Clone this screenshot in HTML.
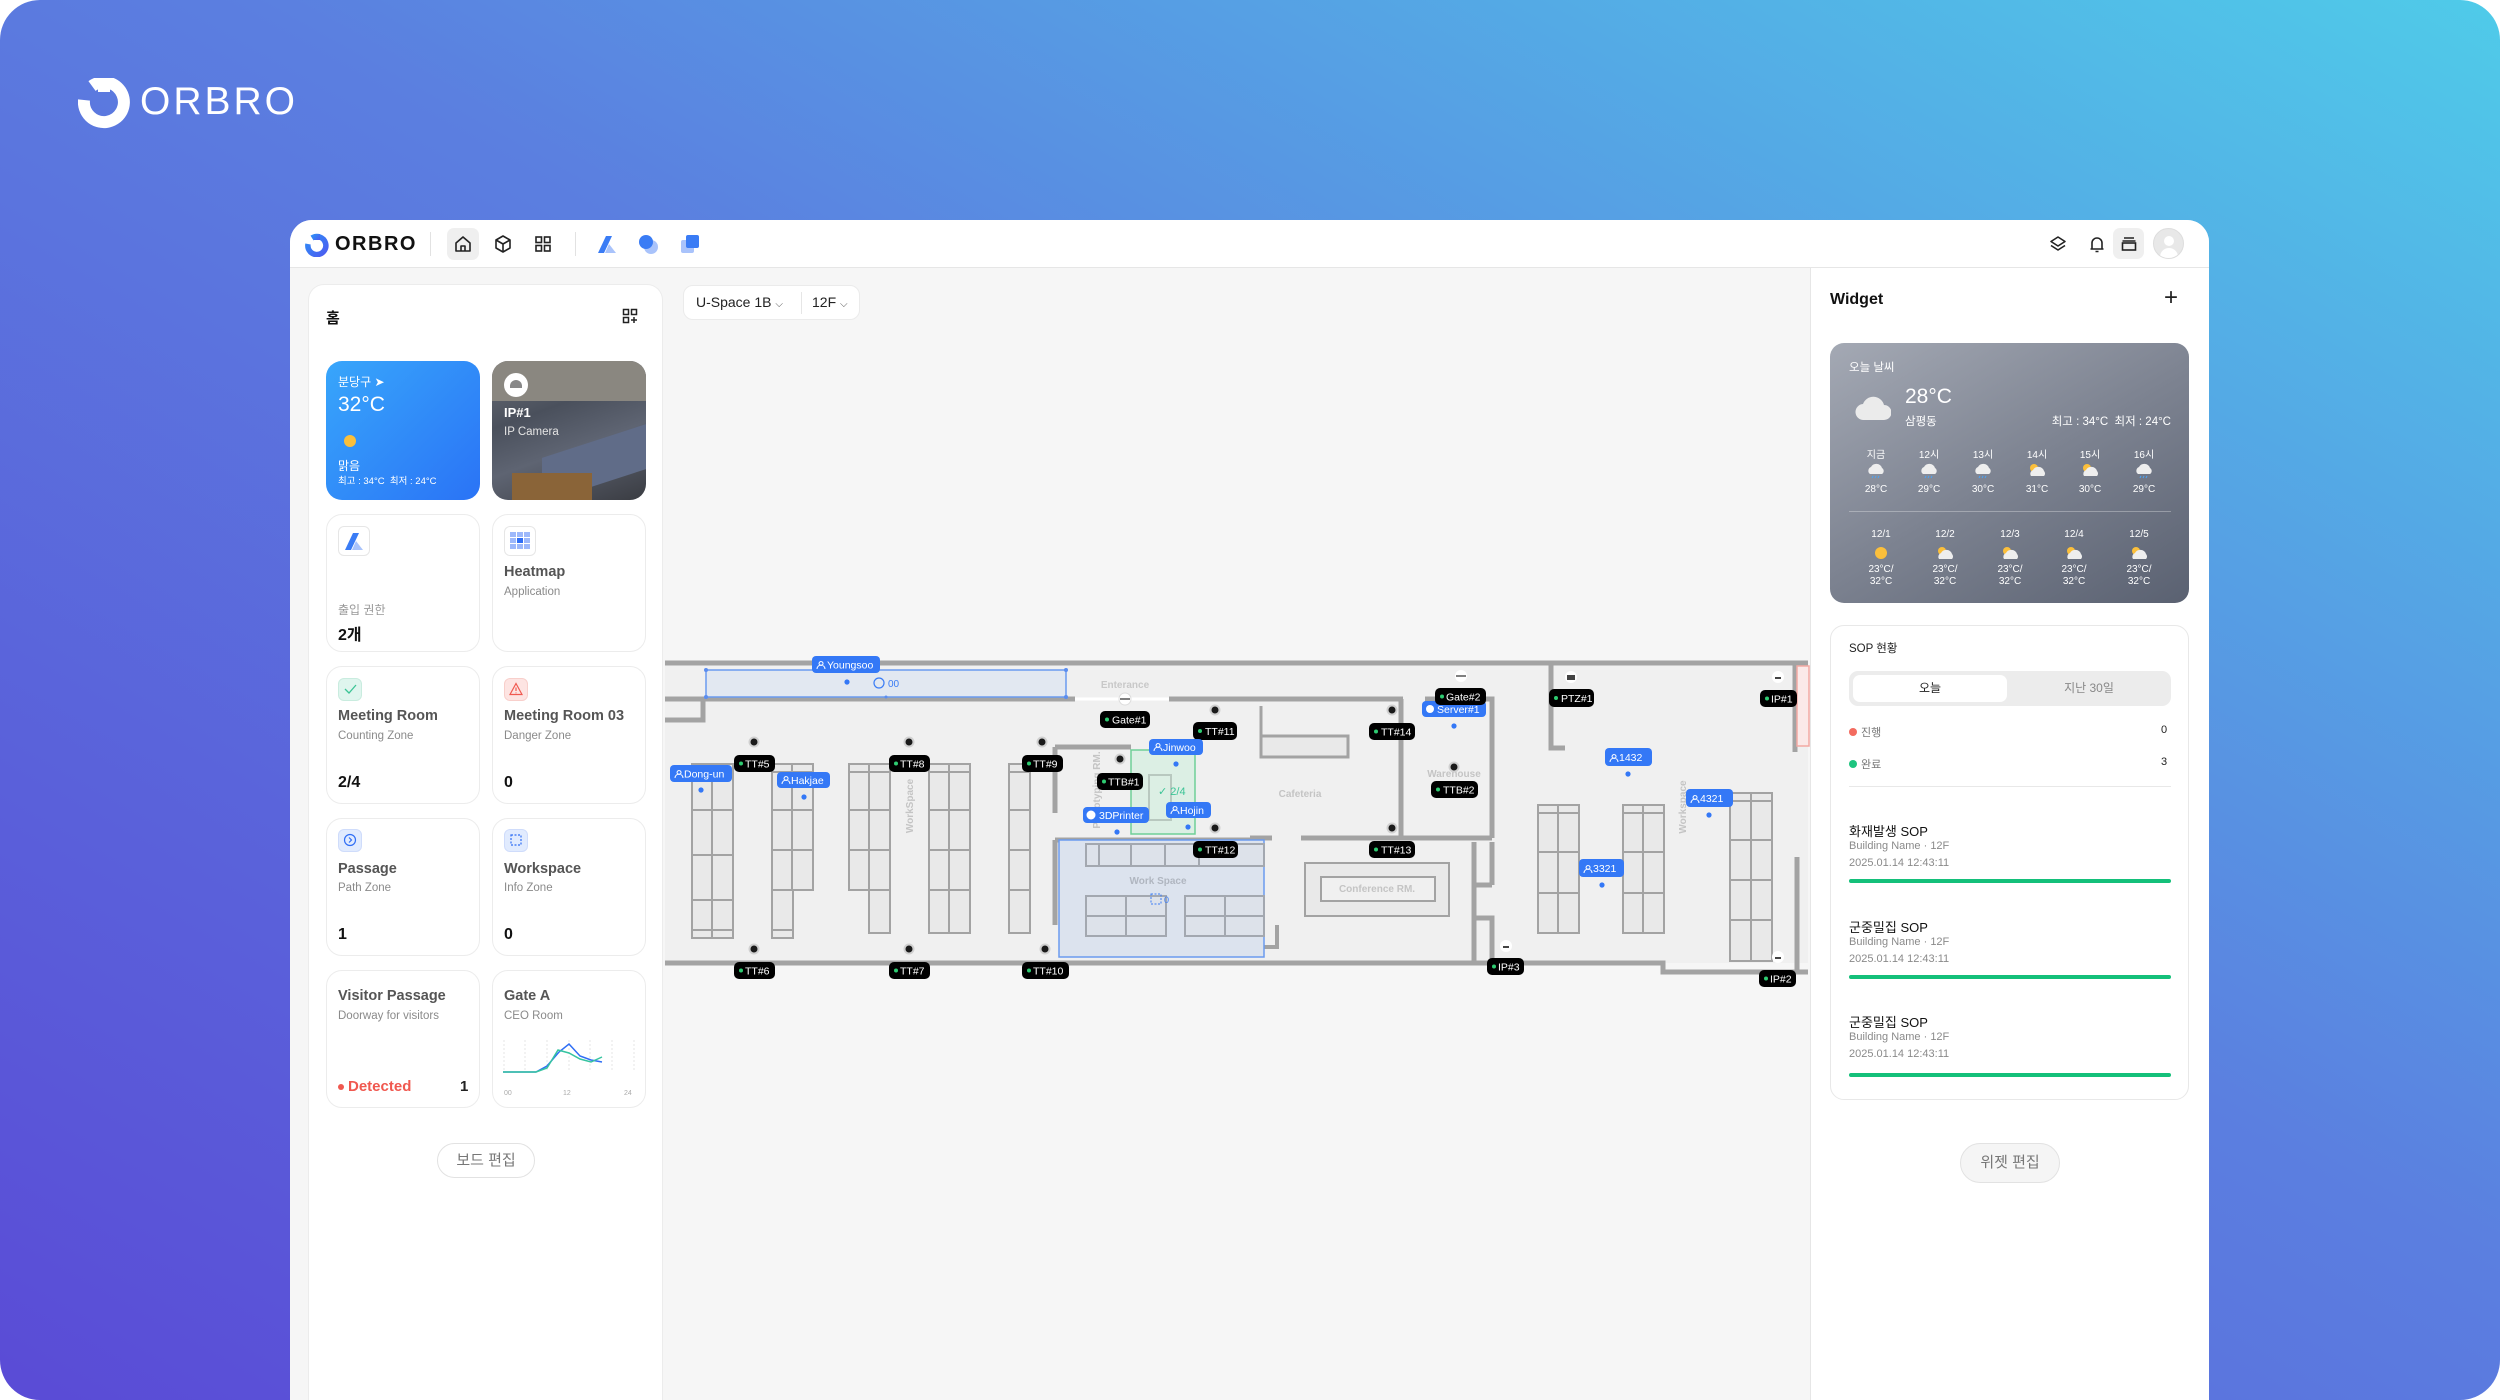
<!DOCTYPE html>
<html style="width:2500px;height:1400px;overflow:hidden"><head><meta charset="utf-8">
<style>
*{margin:0;padding:0;box-sizing:border-box}
body{width:2500px;height:1400px;overflow:hidden;background:#fff;font-family:"Liberation Sans","Noto Sans CJK KR",sans-serif;position:relative}
.bg{position:absolute;left:0;top:0;width:2500px;height:1400px;border-radius:40px;background:linear-gradient(to top right,#5a4bd6 0%,#5b7fe0 55%,#4fcbe9 100%);overflow:hidden}
.a{position:absolute}
.win{position:absolute;left:290px;top:220px;width:1919px;height:1180px;background:#f6f6f6;border-radius:22px 22px 0 0;overflow:hidden}
.top{position:absolute;left:290px;top:220px;width:1919px;height:48px;background:#fff;border-bottom:1px solid #e6e6e6;border-radius:22px 22px 0 0}
.panel{position:absolute;left:308px;top:284px;width:355px;height:1116px;background:#fff;border:1px solid #ececec;border-bottom:none;border-radius:16px 16px 0 0}
.card{position:absolute;width:154px;height:138px;background:#fff;border:1px solid #ececec;border-radius:16px}
.t{position:absolute;white-space:nowrap}
.ttl{font-size:14.5px;font-weight:bold;color:#555}
.sub{font-size:11.5px;color:#8a8a8a}
.val{font-size:16px;font-weight:bold;color:#111}
.ib{position:absolute;width:24px;height:23px;border-radius:6px}
.rp{position:absolute;left:1810px;top:268px;width:399px;height:1132px;background:#fff;border-left:1px solid #e6e6e6}
.w{color:#fff;position:absolute;white-space:nowrap;text-align:center}
.btn{position:absolute;background:#f5f5f5;border:1px solid #e2e2e2;border-radius:20px;color:#777;font-size:15px;text-align:center}
</style></head><body>
<div class="bg">
 <svg class="a" style="left:78px;top:78px" width="52" height="52" viewBox="0 0 52 52">
  <path d="M14 8 A20 20 0 1 1 6 22" fill="none" stroke="#fff" stroke-width="12"/>
  <rect x="20" y="2" width="12" height="12" fill="#fff"/>
 </svg>
 <div class="t" style="left:140px;top:80px;font-size:39px;color:#fff;letter-spacing:3px">ORBRO</div>
</div>

<div class="win"></div>
<div class="top">
 <svg class="a" style="left:15px;top:13px" width="24" height="24" viewBox="0 0 24 24"><defs><linearGradient id="lg" x1="0" y1="0" x2="1" y2="1"><stop offset="0" stop-color="#2f8df7"/><stop offset="1" stop-color="#4b5cf0"/></linearGradient></defs><path d="M7 5 A9 9 0 1 1 3 11" fill="none" stroke="url(#lg)" stroke-width="5.5"/><rect x="9" y="1" width="6" height="6" fill="url(#lg)"/></svg>
 <div class="t" style="left:45px;top:13px;font-size:20px;font-weight:bold;color:#111;letter-spacing:1.5px">ORBRO</div>
 <div class="a" style="left:140px;top:12px;width:1px;height:24px;background:#e2e2e2"></div>
 <div class="a" style="left:157px;top:8px;width:32px;height:32px;background:#efefef;border-radius:7px"></div>
 <svg class="a" style="left:163px;top:14px" width="20" height="20" viewBox="0 0 20 20" fill="none" stroke="#222" stroke-width="1.6" stroke-linejoin="round"><path d="M3 9 L10 3 L17 9 V17 H3 Z"/><path d="M8 17 V12 H12 V17"/></svg>
 <svg class="a" style="left:203px;top:14px" width="20" height="20" viewBox="0 0 20 20" fill="none" stroke="#222" stroke-width="1.6" stroke-linejoin="round"><path d="M10 2 L17 6 V14 L10 18 L3 14 V6 Z"/><path d="M3 6 L10 10 L17 6 M10 10 V18"/></svg>
 <svg class="a" style="left:243px;top:14px" width="20" height="20" viewBox="0 0 20 20" fill="none" stroke="#222" stroke-width="1.6"><rect x="3" y="3" width="5.5" height="5.5"/><rect x="11.5" y="3" width="5.5" height="5.5"/><rect x="3" y="11.5" width="5.5" height="5.5"/><rect x="11.5" y="11.5" width="5.5" height="5.5"/></svg>
 <div class="a" style="left:285px;top:12px;width:1px;height:24px;background:#e2e2e2"></div>
 <svg class="a" style="left:306px;top:13px" width="22" height="22" viewBox="0 0 22 22"><path d="M2 20 L10 3 H16 L8 20 Z" fill="#3a7cf5"/><path d="M13 11 L20 20 H9 Z" fill="#a9c3fb"/></svg>
 <svg class="a" style="left:347px;top:13px" width="22" height="22" viewBox="0 0 22 22"><circle cx="14" cy="14" r="7" fill="#a9c3fb"/><circle cx="9" cy="9" r="7" fill="#3a7cf5"/></svg>
 <svg class="a" style="left:389px;top:13px" width="22" height="22" viewBox="0 0 22 22"><rect x="2" y="7" width="13" height="13" rx="2" fill="#a9c3fb"/><rect x="7" y="2" width="13" height="13" rx="2" fill="#3a7cf5"/></svg>
 <svg class="a" style="left:1758px;top:14px" width="20" height="20" viewBox="0 0 20 20" fill="none" stroke="#222" stroke-width="1.6" stroke-linejoin="round"><path d="M10 3 L17 7.5 L10 12 L3 7.5 Z"/><path d="M3 11.5 L10 16 L17 11.5"/></svg>
 <svg class="a" style="left:1797px;top:14px" width="20" height="20" viewBox="0 0 20 20" fill="none" stroke="#222" stroke-width="1.6"><path d="M5 15 V9 A5 5 0 0 1 15 9 V15 M3.5 15 H16.5 M8.5 17.5 H11.5"/></svg>
 <div class="a" style="left:1823px;top:8px;width:31px;height:31px;background:#efefef;border-radius:7px"></div>
 <svg class="a" style="left:1829px;top:14px" width="20" height="20" viewBox="0 0 20 20" fill="none" stroke="#222" stroke-width="1.6"><path d="M5 4 H15 M3.5 7 H16.5"/><rect x="3.5" y="9" width="13" height="7"/></svg>
 <div class="a" style="left:1863px;top:8px;width:31px;height:31px;background:#e8e8e8;border-radius:50%;border:1px solid #ddd;overflow:hidden"><div class="a" style="left:10px;top:7px;width:10px;height:10px;border-radius:50%;background:#fff"></div><div class="a" style="left:6px;top:19px;width:18px;height:12px;border-radius:9px 9px 0 0;background:#fff"></div></div>
</div>

<div class="panel"></div>
<div class="t" style="left:326px;top:307px;font-size:15px;font-weight:bold;color:#111">홈</div>
<svg class="a" style="left:622px;top:308px" width="16" height="16" viewBox="0 0 16 16" fill="none" stroke="#222" stroke-width="1.5"><rect x="1.5" y="1.5" width="5" height="5"/><rect x="9.5" y="1.5" width="5" height="5"/><rect x="1.5" y="9.5" width="5" height="5"/><path d="M12 9 V15 M9 12 H15"/></svg>

<div class="card" style="left:326px;top:361px;height:139px;border:none;background:linear-gradient(135deg,#38a6fb,#2a73f6)"></div>
<div class="w" style="left:338px;top:373px;font-size:12px">분당구 ➤</div>
<div class="w" style="left:338px;top:393px;font-size:21px">32°C</div>
<div class="a" style="left:344px;top:435px;width:12px;height:12px;border-radius:50%;background:#fbbf3b"></div>
<div class="w" style="left:338px;top:457px;font-size:12px">맑음</div>
<div class="w" style="left:338px;top:473px;font-size:9.5px">최고 : 34°C &nbsp;최저 : 24°C</div>

<div class="card" style="left:492px;top:361px;height:139px;border:none;overflow:hidden;background:linear-gradient(160deg,#6c7078 0%,#4a505c 35%,#5e6472 60%,#3a3c42 100%)">
 <div class="a" style="left:0;top:0;width:154px;height:40px;background:#8a8780"></div>
 <div class="a" style="left:50px;top:80px;width:104px;height:45px;background:#606c88;transform:skewY(-18deg)"></div>
 <div class="a" style="left:20px;top:112px;width:80px;height:30px;background:#8a6438"></div>
</div>
<div class="a" style="left:504px;top:373px;width:24px;height:24px;border-radius:50%;background:#fff"><div class="a" style="left:6px;top:7px;width:12px;height:8px;border-radius:6px 6px 0 0;background:#888"></div></div>
<div class="w" style="left:504px;top:405px;font-size:13px;font-weight:bold">IP#1</div>
<div class="w" style="left:504px;top:426px;font-size:11.5px;color:#e4e4e4">IP Camera</div>

<div class="card" style="left:326px;top:514px"></div>
<div class="ib" style="left:338px;top:526px;width:32px;height:30px;border:1px solid #e6e6e6;background:#fff"></div>
<svg class="a" style="left:342px;top:530px" width="24" height="22" viewBox="0 0 22 22"><path d="M2 20 L10 3 H16 L8 20 Z" fill="#3a7cf5"/><path d="M13 11 L20 20 H9 Z" fill="#a9c3fb"/></svg>
<div class="t" style="left:338px;top:601px;font-size:12px;color:#999">출입 권한</div>
<div class="t val" style="left:338px;top:621px">2개</div>
<div class="card" style="left:492px;top:514px"></div>
<div class="ib" style="left:504px;top:526px;width:32px;height:30px;border:1px solid #e6e6e6;background:#fff"></div>
<svg class="a" style="left:510px;top:532px" width="20" height="18" viewBox="0 0 20 18"><g fill="#9db8fb"><rect x="0" y="0" width="6" height="5"/><rect x="7" y="0" width="6" height="5"/><rect x="14" y="0" width="6" height="5"/><rect x="0" y="6" width="6" height="5"/><rect x="14" y="6" width="6" height="5"/><rect x="0" y="12" width="6" height="5"/><rect x="7" y="12" width="6" height="5"/><rect x="14" y="12" width="6" height="5"/></g><rect x="7" y="6" width="6" height="5" fill="#2f6ef5"/></svg>
<div class="t ttl" style="left:504px;top:564px">Heatmap</div>
<div class="t sub" style="left:504px;top:586px">Application</div>

<div class="card" style="left:326px;top:666px"></div>
<div class="ib" style="left:338px;top:678px;background:#dff5ee;border:1px solid #c9ecdf"></div>
<svg class="a" style="left:343px;top:682px" width="14" height="14" viewBox="0 0 14 14"><path d="M2 7 L6 11 L13 3" fill="none" stroke="#3cc496" stroke-width="1.3"/></svg>
<div class="t ttl" style="left:338px;top:708px">Meeting Room</div>
<div class="t sub" style="left:338px;top:730px">Counting Zone</div>
<div class="t val" style="left:338px;top:774px">2/4</div>
<div class="card" style="left:492px;top:666px"></div>
<div class="ib" style="left:504px;top:678px;background:#fde4e2;border:1px solid #f8cfcb"></div>
<svg class="a" style="left:509px;top:682px" width="14" height="14" viewBox="0 0 14 14" fill="none" stroke="#f0584f" stroke-width="1.2"><path d="M7 1.5 L13 12.5 H1 Z"/><path d="M7 5.5 V9 M7 10.5 V11.3"/></svg>
<div class="t ttl" style="left:504px;top:708px">Meeting Room 03</div>
<div class="t sub" style="left:504px;top:730px">Danger Zone</div>
<div class="t val" style="left:504px;top:774px">0</div>

<div class="card" style="left:326px;top:818px"></div>
<div class="ib" style="left:338px;top:829px;background:#e1ebfe;border:1px solid #cfdcfb"></div>
<svg class="a" style="left:343px;top:833px" width="14" height="14" viewBox="0 0 14 14" fill="none" stroke="#2f6ef5" stroke-width="1.2"><circle cx="7" cy="7" r="5.5"/><path d="M6 4.5 L8.5 7 L6 9.5"/></svg>
<div class="t ttl" style="left:338px;top:861px">Passage</div>
<div class="t sub" style="left:338px;top:882px">Path Zone</div>
<div class="t val" style="left:338px;top:926px">1</div>
<div class="card" style="left:492px;top:818px"></div>
<div class="ib" style="left:504px;top:829px;background:#e1ebfe;border:1px solid #cfdcfb"></div>
<svg class="a" style="left:509px;top:833px" width="14" height="14" viewBox="0 0 14 14" fill="none" stroke="#2f6ef5" stroke-width="1.2" stroke-dasharray="2 1.5"><rect x="2" y="2" width="10" height="10"/></svg>
<div class="t ttl" style="left:504px;top:861px">Workspace</div>
<div class="t sub" style="left:504px;top:882px">Info Zone</div>
<div class="t val" style="left:504px;top:926px">0</div>

<div class="card" style="left:326px;top:970px"></div>
<div class="t ttl" style="left:338px;top:988px">Visitor Passage</div>
<div class="t sub" style="left:338px;top:1010px">Doorway for visitors</div>
<div class="a" style="left:338px;top:1084px;width:6px;height:6px;border-radius:50%;background:#f0584f"></div>
<div class="t" style="left:348px;top:1078px;font-size:15px;font-weight:bold;color:#f0584f">Detected</div>
<div class="t" style="left:460px;top:1078px;font-size:15px;font-weight:bold;color:#222">1</div>
<div class="card" style="left:492px;top:970px"></div>
<div class="t ttl" style="left:504px;top:988px">Gate A</div>
<div class="t sub" style="left:504px;top:1010px">CEO Room</div>
<svg class="a" style="left:503px;top:1040px" width="132" height="60" viewBox="0 0 132 60">
 <g stroke="#e4e4e4" stroke-dasharray="2 2" stroke-width="1"><path d="M1 0 V32 M22 0 V32 M44 0 V32 M66 0 V32 M87 0 V32 M109 0 V32 M131 0 V32"/></g>
 <path d="M0 32 H33 L44 26 L56 12 L66 4 L77 16 L88 20 L99 22" fill="none" stroke="#2f6ef5" stroke-width="1.5"/>
 <path d="M0 32 H33 L44 28 L55 10 L66 13 L77 19 L88 22 L99 17" fill="none" stroke="#36c4a0" stroke-width="1.5"/>
 <text x="1" y="55" font-size="7" fill="#aaa" font-family="Liberation Sans">00</text>
 <text x="60" y="55" font-size="7" fill="#aaa" font-family="Liberation Sans">12</text>
 <text x="121" y="55" font-size="7" fill="#aaa" font-family="Liberation Sans">24</text>
</svg>
<div class="btn" style="left:437px;top:1143px;width:98px;height:35px;line-height:33px;background:#fff">보드 편집</div>

<div class="a" style="left:683px;top:285px;width:177px;height:35px;background:#fff;border:1px solid #ebebeb;border-radius:10px"></div>
<div class="t" style="left:696px;top:294px;font-size:14px;color:#222">U-Space 1B <span style="font-size:10px;color:#555">⌵</span></div>
<div class="a" style="left:801px;top:292px;width:1px;height:22px;background:#e6e6e6"></div>
<div class="t" style="left:812px;top:294px;font-size:14px;color:#222">12F <span style="font-size:10px;color:#555">⌵</span></div>

<svg class="a" style="left:0;top:0" width="2500" height="1400" viewBox="0 0 2500 1400" font-family="Liberation Sans">
 <rect x="665" y="663" width="1143" height="300" fill="#f0f0f0"/>
 <g fill="none" stroke="#a3a3a3" stroke-width="5">
  <path d="M665 663 H1808"/>
  <path d="M665 699 H1075 M1169 699 H1250"/>
  <path d="M665 720 H703 V699"/>
  <path d="M665 963 H1663 V972 H1808"/>
  <path d="M1055 747 V813 M1055 747 H1131 M1055 925 V840 M1055 840 H1264"/>
  <path d="M1250 699 H1403 M1425 699 H1492 V838 M1401 699 V837 M1272 838 H1250 M1301 838 H1492"/>
  <path d="M1474 842 V963 M1492 842 V885 M1474 885 H1492 M1474 918 H1492 V963"/>
  <path d="M1551 663 V748 H1565"/>
  <path d="M1795 663 V752 M1797 857 V970"/>
  <path d="M1261 706 V736 H1348 V757 H1261 Z" stroke-width="3" fill="#e9e9e9"/>
  <path d="M1277 925 V947 H1262" stroke-width="4"/>
 </g>
 <rect x="1797" y="666" width="12" height="80" fill="#fbe9e8" stroke="#f3a9a3" stroke-width="1.5"/>
 <path d="M1075 699 H1169" stroke="#fff" stroke-width="3"/>
 <circle cx="1125" cy="699" r="6" fill="#fff" stroke="#ddd"/><path d="M1120 699 H1130" stroke="#555" stroke-width="1.5"/>
 <text x="1125" y="688" font-size="10" fill="#c8c8c8" text-anchor="middle" font-weight="bold">Enterance</text>
 <rect x="706" y="670" width="360" height="27" fill="#e2e8f1" stroke="#6b9bef" stroke-width="1.5"/>
 <g fill="#5b8def"><circle cx="706" cy="670" r="2"/><circle cx="1066" cy="670" r="2"/><circle cx="706" cy="697" r="2"/><circle cx="1066" cy="697" r="2"/><circle cx="886" cy="697" r="1.5"/></g>
 <circle cx="879" cy="683" r="5" fill="none" stroke="#3a7cf5" stroke-width="1.2"/><text x="888" y="687" font-size="10" fill="#3a7cf5">00</text>
 <rect x="1131" y="750" width="64" height="84" fill="#dcefe4" stroke="#6fcf97" stroke-width="1.5"/>
 <rect x="1149" y="775" width="22" height="45" fill="none" stroke="#b8c8bf" stroke-width="2"/>
 <text x="1158" y="795" font-size="11" fill="#3cc496">✓ 2/4</text>
 <rect x="1059" y="840" width="205" height="117" fill="#dce3ee" stroke="#6b9bef" stroke-width="1.5"/>
 <g fill="#dde2ea" stroke="#a3a8b0" stroke-width="2">
  <rect x="1086" y="844" width="178" height="22"/><path d="M1099 844 V866 M1131 844 V866 M1165 844 V866 M1199 844 V866" fill="none"/>
  <rect x="1086" y="896" width="80" height="40"/><path d="M1126 896 V936 M1086 916 H1166" fill="none"/>
  <rect x="1185" y="896" width="79" height="40"/><path d="M1225 896 V936 M1185 916 H1264" fill="none"/>
 </g>
 <text x="1158" y="884" font-size="10" fill="#b0b6c0" text-anchor="middle" font-weight="bold">Work Space</text>
 <rect x="1151" y="894" width="10" height="10" fill="none" stroke="#3a7cf5" stroke-dasharray="2 1.5"/><text x="1164" y="903" font-size="9" fill="#3a7cf5">0</text>
 <g fill="#e9e9e9" stroke="#a3a3a3" stroke-width="2">
  <rect x="692" y="764" width="41" height="174"/><path d="M712 764 V938 M692 772 H733 M692 810 H733 M692 855 H733 M692 900 H733 M692 930 H733" fill="none"/>
  <rect x="772" y="764" width="41" height="126"/><path d="M792 764 V890 M772 772 H813 M772 810 H813 M772 850 H813" fill="none"/>
  <rect x="772" y="890" width="21" height="48"/><path d="M772 930 H793" fill="none"/>
  <rect x="849" y="764" width="41" height="126"/><path d="M869 764 V890 M849 772 H890 M849 810 H890 M849 850 H890" fill="none"/>
  <rect x="869" y="890" width="21" height="43"/>
  <rect x="929" y="764" width="41" height="169"/><path d="M949 764 V933 M929 772 H970 M929 810 H970 M929 850 H970 M929 890 H970" fill="none"/>
  <rect x="1009" y="764" width="21" height="169"/><path d="M1009 772 H1030 M1009 810 H1030 M1009 850 H1030 M1009 890 H1030" fill="none"/>
  <rect x="1538" y="805" width="41" height="128"/><path d="M1558 805 V933 M1538 813 H1579 M1538 852 H1579 M1538 893 H1579" fill="none"/>
  <rect x="1623" y="805" width="41" height="128"/><path d="M1643 805 V933 M1623 813 H1664 M1623 852 H1664 M1623 893 H1664" fill="none"/>
  <rect x="1730" y="793" width="42" height="168"/><path d="M1751 793 V961 M1730 801 H1772 M1730 840 H1772 M1730 880 H1772 M1730 920 H1772" fill="none"/>
 </g>
 <rect x="1305" y="863" width="144" height="53" fill="#e9e9e9" stroke="#a3a3a3" stroke-width="2"/>
 <rect x="1321" y="877" width="114" height="24" fill="#f0f0f0" stroke="#a3a3a3" stroke-width="2"/>
 <g font-size="10" fill="#c4c4c4" font-weight="bold" text-anchor="middle">
  <text x="1377" y="892">Conference RM.</text>
  <text x="1300" y="797">Cafeteria</text>
  <text x="1454" y="777">Warehouse</text>
  <text transform="translate(913 806) rotate(-90)">WorkSpace</text>
  <text transform="translate(1686 807) rotate(-90)">Workspace</text>
  <text transform="translate(1100 790) rotate(-90)">Prototyping RM.</text>
 </g>
 <circle cx="1461" cy="676" r="6" fill="#fff"/><path d="M1456 676 H1466" stroke="#555" stroke-width="1.5"/>
 <g fill="#1a1a1a" stroke="#d0d0d0" stroke-width="2">
  <circle cx="754" cy="742" r="4.5"/><circle cx="909" cy="742" r="4.5"/><circle cx="1042" cy="742" r="4.5"/><circle cx="1215" cy="710" r="4.5"/><circle cx="1120" cy="759" r="4.5"/><circle cx="1215" cy="828" r="4.5"/><circle cx="754" cy="949" r="4.5"/><circle cx="909" cy="949" r="4.5"/><circle cx="1045" cy="949" r="4.5"/><circle cx="1392" cy="710" r="4.5"/><circle cx="1454" cy="767" r="4.5"/><circle cx="1392" cy="828" r="4.5"/>
 </g>
 <g fill="#fff"><circle cx="1571" cy="677" r="6"/><circle cx="1778" cy="677" r="6"/><circle cx="1506" cy="946" r="6"/><circle cx="1778" cy="957" r="6"/></g>
 <g fill="#444"><path d="M1567 675 h8 v5 h-8z"/><path d="M1775 677 h6 v2 h-6z"/><path d="M1503 946 h6 v2 h-6z"/><path d="M1775 957 h6 v2 h-6z"/></g>
 <g font-size="10.5" fill="#fff">
  <rect x="1100" y="711" width="50" height="17" rx="5" fill="#000"/><circle cx="1107" cy="719.5" r="2" fill="#2ecc71"/><text x="1112" y="723.5">Gate#1</text>
  <rect x="1193" y="722" width="44" height="18" rx="5" fill="#000"/><circle cx="1200" cy="731" r="2" fill="#2ecc71"/><text x="1205" y="735">TT#11</text>
  <rect x="734" y="755" width="41" height="17" rx="5" fill="#000"/><circle cx="741" cy="763.5" r="2" fill="#2ecc71"/><text x="745" y="767.5">TT#5</text>
  <rect x="889" y="755" width="41" height="17" rx="5" fill="#000"/><circle cx="896" cy="763.5" r="2" fill="#2ecc71"/><text x="900" y="767.5">TT#8</text>
  <rect x="1022" y="755" width="41" height="17" rx="5" fill="#000"/><circle cx="1029" cy="763.5" r="2" fill="#2ecc71"/><text x="1033" y="767.5">TT#9</text>
  <rect x="1097" y="773" width="46" height="17" rx="5" fill="#000"/><circle cx="1104" cy="781.5" r="2" fill="#2ecc71"/><text x="1108" y="785.5">TTB#1</text>
  <rect x="1193" y="841" width="45" height="17" rx="5" fill="#000"/><circle cx="1200" cy="849.5" r="2" fill="#2ecc71"/><text x="1205" y="853.5">TT#12</text>
  <rect x="734" y="962" width="41" height="17" rx="5" fill="#000"/><circle cx="741" cy="970.5" r="2" fill="#2ecc71"/><text x="745" y="974.5">TT#6</text>
  <rect x="889" y="962" width="41" height="17" rx="5" fill="#000"/><circle cx="896" cy="970.5" r="2" fill="#2ecc71"/><text x="900" y="974.5">TT#7</text>
  <rect x="1022" y="962" width="47" height="17" rx="5" fill="#000"/><circle cx="1029" cy="970.5" r="2" fill="#2ecc71"/><text x="1033" y="974.5">TT#10</text>
  <rect x="1369" y="723" width="46" height="17" rx="5" fill="#000"/><circle cx="1376" cy="731.5" r="2" fill="#2ecc71"/><text x="1381" y="735.5">TT#14</text>
  <rect x="1431" y="781" width="47" height="17" rx="5" fill="#000"/><circle cx="1438" cy="789.5" r="2" fill="#2ecc71"/><text x="1443" y="793.5">TTB#2</text>
  <rect x="1369" y="841" width="46" height="17" rx="5" fill="#000"/><circle cx="1376" cy="849.5" r="2" fill="#2ecc71"/><text x="1381" y="853.5">TT#13</text>
  <rect x="1549" y="689" width="45" height="18" rx="5" fill="#000"/><circle cx="1556" cy="698" r="2" fill="#2ecc71"/><text x="1561" y="702">PTZ#1</text>
  <rect x="1760" y="690" width="37" height="17" rx="5" fill="#000"/><circle cx="1767" cy="698.5" r="2" fill="#2ecc71"/><text x="1771" y="702.5">IP#1</text>
  <rect x="1487" y="958" width="37" height="17" rx="5" fill="#000"/><circle cx="1494" cy="966.5" r="2" fill="#2ecc71"/><text x="1498" y="970.5">IP#3</text>
  <rect x="1759" y="970" width="37" height="17" rx="5" fill="#000"/><circle cx="1766" cy="978.5" r="2" fill="#2ecc71"/><text x="1770" y="982.5">IP#2</text>
  <rect x="1422" y="701" width="64" height="16" rx="4" fill="#3478f6"/><circle cx="1430" cy="709" r="4" fill="#fff"/><text x="1437" y="713">Server#1</text>
  <rect x="1435" y="688" width="51" height="17" rx="5" fill="#000"/><circle cx="1442" cy="696.5" r="2" fill="#2ecc71"/><text x="1446" y="700.5">Gate#2</text>
 </g>
 <g font-size="10.5" fill="#fff">
  <rect x="812" y="656" width="68" height="17" rx="4" fill="#3478f6"/><text x="827" y="668.5">Youngsoo</text>
  <rect x="670" y="765" width="62" height="17" rx="4" fill="#3478f6"/><text x="684" y="777.5">Dong-un</text>
  <rect x="777" y="772" width="53" height="16" rx="4" fill="#3478f6"/><text x="791" y="784">Hakjae</text>
  <rect x="1149" y="739" width="54" height="16" rx="4" fill="#3478f6"/><text x="1163" y="751">Jinwoo</text>
  <rect x="1083" y="807" width="66" height="16" rx="4" fill="#3478f6"/><circle cx="1091" cy="815" r="4.5" fill="#fff"/><text x="1099" y="819">3DPrinter</text>
  <rect x="1166" y="802" width="45" height="16" rx="4" fill="#3478f6"/><text x="1180" y="814">Hojin</text>
  <rect x="1605" y="748" width="47" height="18" rx="4" fill="#3478f6"/><text x="1619" y="761">1432</text>
  <rect x="1686" y="789" width="47" height="18" rx="4" fill="#3478f6"/><text x="1700" y="802">4321</text>
  <rect x="1579" y="859" width="45" height="18" rx="4" fill="#3478f6"/><text x="1593" y="872">3321</text>
 </g>
 <g fill="none" stroke="#fff" stroke-width="1">
  <path d="M817 669 a4 4 0 0 1 8 0 M821 661.5 a2 2 0 1 0 0.1 0"/>
  <path d="M675 778 a4 4 0 0 1 8 0 M679 770.5 a2 2 0 1 0 0.1 0"/>
  <path d="M782 784 a4 4 0 0 1 8 0 M786 776.5 a2 2 0 1 0 0.1 0"/>
  <path d="M1154 751 a4 4 0 0 1 8 0 M1158 743.5 a2 2 0 1 0 0.1 0"/>
  <path d="M1171 814 a4 4 0 0 1 8 0 M1175 806.5 a2 2 0 1 0 0.1 0"/>
  <path d="M1610 762 a4 4 0 0 1 8 0 M1614 754.5 a2 2 0 1 0 0.1 0"/>
  <path d="M1691 803 a4 4 0 0 1 8 0 M1695 795.5 a2 2 0 1 0 0.1 0"/>
  <path d="M1584 873 a4 4 0 0 1 8 0 M1588 865.5 a2 2 0 1 0 0.1 0"/>
 </g>
 <g fill="#3478f6"><circle cx="847" cy="682" r="2.6"/><circle cx="701" cy="790" r="2.6"/><circle cx="804" cy="797" r="2.6"/><circle cx="1176" cy="764" r="2.6"/><circle cx="1117" cy="832" r="2.6"/><circle cx="1188" cy="827" r="2.6"/><circle cx="1454" cy="726" r="2.6"/><circle cx="1628" cy="774" r="2.6"/><circle cx="1709" cy="815" r="2.6"/><circle cx="1602" cy="885" r="2.6"/></g>
</svg>

<div class="rp"></div>
<div class="t" style="left:1830px;top:291px;font-size:16px;font-weight:bold;color:#111">Widget</div>
<div class="t" style="left:2164px;top:284px;font-size:24px;color:#222;font-weight:300">+</div>
<div class="a" style="left:1830px;top:343px;width:359px;height:260px;border-radius:14px;background:linear-gradient(150deg,#a4a9b4 0%,#7d8391 50%,#5a6171 100%)"></div>
<div class="w" style="left:1849px;top:359px;font-size:11.5px">오늘 날씨</div>
<svg class="a" style="left:1855px;top:393px" width="36" height="28" viewBox="0 0 36 28"><path d="M9 27 A8 8 0 0 1 8 11 A11 11 0 0 1 29 12 A7.5 7.5 0 0 1 29 27 Z" fill="#ebebeb"/></svg>
<div class="w" style="left:1905px;top:385px;font-size:21px">28°C</div>
<div class="w" style="left:1905px;top:413px;font-size:11.5px">삼평동</div>
<div class="w" style="left:2041px;top:413px;font-size:11.5px;width:130px;text-align:right">최고 : 34°C &nbsp;최저 : 24°C</div>
<div class="a" style="left:1849px;top:511px;width:322px;height:1px;background:rgba(255,255,255,.3)"></div>
<div class="w" style="left:1856px;top:446px;width:40px;font-size:10px">지금</div><div class="w" style="left:1856px;top:484px;width:40px;font-size:10px">28°C</div>
<div class="w" style="left:1909px;top:446px;width:40px;font-size:10px">12시</div><div class="w" style="left:1909px;top:484px;width:40px;font-size:10px">29°C</div>
<div class="w" style="left:1963px;top:446px;width:40px;font-size:10px">13시</div><div class="w" style="left:1963px;top:484px;width:40px;font-size:10px">30°C</div>
<div class="w" style="left:2017px;top:446px;width:40px;font-size:10px">14시</div><div class="w" style="left:2017px;top:484px;width:40px;font-size:10px">31°C</div>
<div class="w" style="left:2070px;top:446px;width:40px;font-size:10px">15시</div><div class="w" style="left:2070px;top:484px;width:40px;font-size:10px">30°C</div>
<div class="w" style="left:2124px;top:446px;width:40px;font-size:10px">16시</div><div class="w" style="left:2124px;top:484px;width:40px;font-size:10px">29°C</div>
<svg class="a" style="left:1830px;top:455px" width="359" height="140" viewBox="1830 455 359 140">
 <defs><g id="rc"><path d="M-6 6 A4 4 0 0 1 -5 -1 A6 6 0 0 1 6 0 A3.5 3.5 0 0 1 6 6 Z" fill="#eee"/><path d="M-3 8 l-1 2 M0 8 l-1 2 M3 8 l-1 2" stroke="#4aa3f5" stroke-width="1"/></g>
 <g id="sc"><circle cx="-3" cy="-2" r="4" fill="#fbbf3b"/><path d="M-6 6 A4 4 0 0 1 -4 0 A6 6 0 0 1 7 1 A3.5 3.5 0 0 1 7 6 Z" fill="#eee"/></g></defs>
 <use href="#rc" x="1876" y="468"/><use href="#rc" x="1929" y="468"/><use href="#rc" x="1983" y="468"/><use href="#sc" x="2037" y="470"/><use href="#sc" x="2090" y="470"/><use href="#rc" x="2144" y="468"/>
 <circle cx="1881" cy="553" r="6" fill="#fbbf3b"/><use href="#sc" x="1945" y="553"/><use href="#sc" x="2010" y="553"/><use href="#sc" x="2074" y="553"/><use href="#sc" x="2139" y="553"/>
</svg>
<div class="w" style="left:1861px;top:529px;width:40px;font-size:10px">12/1</div><div class="w" style="left:1856px;top:564px;width:50px;font-size:10px;line-height:12px">23°C/<br>32°C</div>
<div class="w" style="left:1925px;top:529px;width:40px;font-size:10px">12/2</div><div class="w" style="left:1920px;top:564px;width:50px;font-size:10px;line-height:12px">23°C/<br>32°C</div>
<div class="w" style="left:1990px;top:529px;width:40px;font-size:10px">12/3</div><div class="w" style="left:1985px;top:564px;width:50px;font-size:10px;line-height:12px">23°C/<br>32°C</div>
<div class="w" style="left:2054px;top:529px;width:40px;font-size:10px">12/4</div><div class="w" style="left:2049px;top:564px;width:50px;font-size:10px;line-height:12px">23°C/<br>32°C</div>
<div class="w" style="left:2119px;top:529px;width:40px;font-size:10px">12/5</div><div class="w" style="left:2114px;top:564px;width:50px;font-size:10px;line-height:12px">23°C/<br>32°C</div>

<div class="a" style="left:1830px;top:625px;width:359px;height:475px;border:1px solid #e8e8e8;border-radius:14px;background:#fff"></div>
<div class="t" style="left:1849px;top:640px;font-size:11.5px;color:#222">SOP 현황</div>
<div class="a" style="left:1849px;top:671px;width:322px;height:35px;background:#ececec;border-radius:9px"></div>
<div class="a" style="left:1853px;top:675px;width:154px;height:27px;background:#fff;border-radius:7px;text-align:center;font-size:12px;line-height:27px;color:#222">오늘</div>
<div class="t" style="left:2010px;top:675px;width:158px;text-align:center;font-size:12px;line-height:27px;color:#888">지난 30일</div>
<div class="a" style="left:1849px;top:728px;width:8px;height:8px;border-radius:50%;background:#f36b5f"></div>
<div class="t" style="left:1861px;top:724px;font-size:11px;color:#777">진행</div>
<div class="t" style="left:2161px;top:724px;font-size:11px;color:#222">0</div>
<div class="a" style="left:1849px;top:760px;width:8px;height:8px;border-radius:50%;background:#1ec47f"></div>
<div class="t" style="left:1861px;top:756px;font-size:11px;color:#777">완료</div>
<div class="t" style="left:2161px;top:756px;font-size:11px;color:#222">3</div>
<div class="a" style="left:1849px;top:786px;width:322px;height:1px;background:#e8e8e8"></div>

<div class="t" style="left:1849px;top:821px;font-size:13px;color:#111">화재발생 SOP</div>
<div class="t" style="left:1849px;top:840px;font-size:11px;color:#8a8a8a">Building Name · 12F</div>
<div class="t" style="left:1849px;top:857px;font-size:11px;color:#8a8a8a">2025.01.14 12:43:11</div>
<div class="a" style="left:1849px;top:879px;width:322px;height:4px;border-radius:2px;background:#14c07a"></div>

<div class="t" style="left:1849px;top:917px;font-size:13px;color:#111">군중밀집 SOP</div>
<div class="t" style="left:1849px;top:936px;font-size:11px;color:#8a8a8a">Building Name · 12F</div>
<div class="t" style="left:1849px;top:953px;font-size:11px;color:#8a8a8a">2025.01.14 12:43:11</div>
<div class="a" style="left:1849px;top:975px;width:322px;height:4px;border-radius:2px;background:#14c07a"></div>

<div class="t" style="left:1849px;top:1012px;font-size:13px;color:#111">군중밀집 SOP</div>
<div class="t" style="left:1849px;top:1031px;font-size:11px;color:#8a8a8a">Building Name · 12F</div>
<div class="t" style="left:1849px;top:1048px;font-size:11px;color:#8a8a8a">2025.01.14 12:43:11</div>
<div class="a" style="left:1849px;top:1073px;width:322px;height:4px;border-radius:2px;background:#14c07a"></div>

<div class="btn" style="left:1960px;top:1143px;width:100px;height:40px;line-height:38px">위젯 편집</div>
</body></html>
